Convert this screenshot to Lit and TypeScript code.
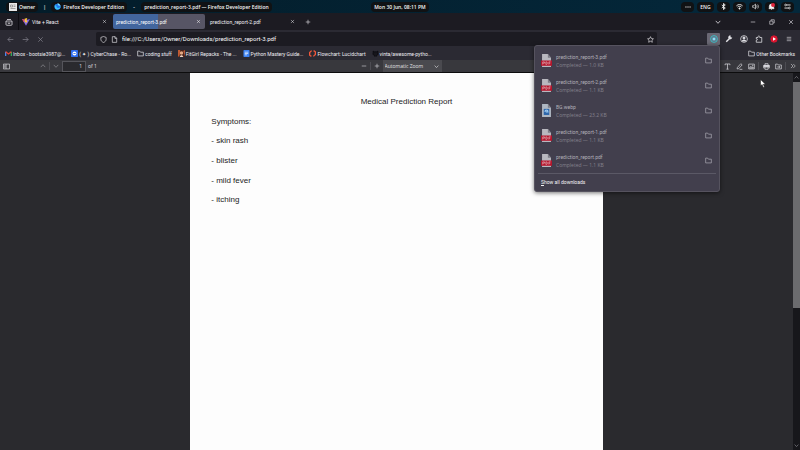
import { LitElement, html, css, svg, TemplateResult, SVGTemplateResult } from "lit";
import { customElement } from "lit/decorators.js";
import { classMap } from "lit/directives/class-map.js";

// Line icons share a 16x16 grid and inherit the text colour.
const shapes: Record<string, SVGTemplateResult> = {
  view: svg`<path d="M2 6h12v7a1.5 1.5 0 0 1-1.5 1.5h-9A1.5 1.5 0 0 1 2 13zM4 3h8M6 9v1.500h4V9"/>`,
  close: svg`<path d="M3 3l10 10M13 3L3 13"/>`,
  plus: svg`<path d="M8 2v12M2 8h12"/>`,
  minus: svg`<path d="M2 8h12"/>`,
  down: svg`<path d="M2 5L8 11.500l6-6.500" stroke-width="2"/>`,
  up: svg`<path d="M2 11L8 4.500l6 6.500" stroke-width="2"/>`,
  restore: svg`<path d="M2 5.500h8.500V14H2zM5.500 5V2H14v8.500h-3"/>`,
  back: svg`<path d="M14.500 8H2M7.500 2.500L2 8l5.500 5.500"/>`,
  forward: svg`<path d="M1.500 8H14M8.500 2.500L14 8l-5.500 5.500"/>`,
  shield: svg`<path d="M8 1.200l6 2v4.300c0 3.500-2.500 6-6 7.300-3.500-1.300-6-3.800-6-7.300V3.200z"/>`,
  page: svg`<path d="M3 1.500h6.500L13 5v9.500H3zM9 1.500V5.500h4"/>`,
  star: svg`<path d="M8 1.500l2 4.300 4.700.6-3.400 3.200.9 4.700L8 12l-4.200 2.300.9-4.700L1.300 6.400l4.700-.6z"/>`,
  folder: svg`<path d="M1.500 13.500v-11h4.500l2 2.500h6.500v8.500z"/>`,
  menu: svg`<path d="M2 3.500h12M2 8h12M2 12.500h12"/>`,
  wrench: svg`<path d="M2.500 13.500L9 7" stroke-width="3"/><path d="M13.500 5.500a3.200 3.200 0 1 1-3-4l-.5 3 2 1z" fill="currentColor"/>`,
  account: svg`<circle cx="8" cy="8" r="6.800"/><circle cx="8" cy="6" r="2.200" fill="currentColor"/><path d="M4 12.200c1-3 7-3 8 0z" fill="currentColor"/>`,
  puzzle: svg`<path d="M2.500 14.500V10.500c3 .5 3-3.500 0-3V5H6C5 1 10.500 1 9.500 5h4v9.500z"/>`,
  sidebar: svg`<path d="M1 2.500h14v11H1zM7 2.500v11M3 5.500h2.500M3 8h2.500M3 10.500h2.500"/>`,
  text: svg`<path d="M2.500 5V2.200h11V5M8 2.200v12M5.500 14h5"/>`,
  pencil: svg`<path d="M3 10.500L11 1.500l3 2.800L6 13l-3.500.5zM8 14.500h6.500"/>`,
  image: svg`<path d="M1.500 2.500h13v11h-13zM3.500 11.500l3-4 2.500 3 1.500-2 2 3z"/><circle cx="11" cy="5.500" r=".8"/>`,
  print: svg`<path d="M4.500 5V1.500h7V5M4 11.500H1.500V5.500h13v6H12M4.500 9h7v5.500h-7z"/><path d="M2 5.500h12v3H2z" fill="currentColor"/>`,
  save: svg`<path d="M1.500 13.500v-11h4.500l2 2h6.500v9zM5 9h6M8.500 6.500L11 9l-2.500 2.500"/>`,
  more: svg`<path d="M2.500 2.500L8 8l-5.500 5.500M8.500 2.500L14 8l-5.500 5.500"/>`,
  dots: svg`<path d="M1 8h3M6.500 8h3M12 8h3" stroke-width="3"/>`,
  bluetooth: svg`<path d="M4 4.500l8 7-4 3.500V1l4 3.500-8 7" stroke-width="2"/>`,
  wifi: svg`<path d="M1 6.500c4-4 10-4 14 0M3.500 9.500c2.500-2.500 6.500-2.500 9 0" stroke-width="2"/><circle cx="8" cy="12.500" r="1.500" fill="currentColor"/>`,
  volume: svg`<path d="M1.500 6H4l4-3.500v11L4 10H1.500z"/><path d="M10.500 5.500c1 1.500 1 3.500 0 5M13 3.500c2 2.500 2 6.500 0 9"/>`,
  bell: svg`<path d="M3 12V7.500a5 5 0 0 1 10 0V12l1 1H2zM7 15h2" fill="currentColor"/><circle cx="11.500" cy="4.500" r="4.500" fill="#e0243c" stroke="none"/>`,
  sliders: svg`<path d="M5 4.500h10M1 11.500h10" stroke-width="2"/><circle cx="3.500" cy="4.500" r="2"/><circle cx="12.500" cy="11.500" r="2"/>`,
  progress: svg`<circle cx="8" cy="8" r="6.800" stroke="#35c6cf" stroke-width="1.800"/><circle cx="8" cy="8" r="3.600" fill="#8fdff0" stroke="#5a8fb0"/>`,
  play: svg`<path d="M8 .5l5.500 2 2 5.500-2 5.500-5.500 2-5.500-2L.5 8l2-5.500z" fill="#d8152f" stroke="none"/><path d="M6 4.500v7l6-3.500z" fill="#fff" stroke="none"/>`,
  owner: svg`<path d="M0 0h16v16H0z" fill="#e8e8e8" stroke="none"/><path d="M3 4h4v4H3zM9 4h4M9 7h4M3 11h10" stroke="#888"/>`,
  firefox: svg`<circle cx="8" cy="8.500" r="7" fill="#2277e8" stroke="none"/><path d="M1.500 6C1 13 6 15.500 9 15c4-.5 6.500-4 6-8-.5 3-3 5-6 4.500C6 11 5 9 6 7 4 7 2.500 6 3 3z" fill="#38c4f5" stroke="none"/><path d="M8 0c3 1 7 4 7 8-2-2-4-3-6-3z" fill="#7ae1ff" stroke="none"/>`,
  vite: svg`<path d="M0 2l8 13.500L16 2 8 4z" fill="#7a63e8" stroke="none"/><path d="M10.500 0L5 1.500 5.500 8h2L7 12l4.500-6.500H9z" fill="#ffc83a" stroke="none"/><path d="M0 2l4 7 1-6z" fill="#e14a5a" stroke="none"/>`,
  gmail: svg`<path d="M1.500 13.500V4" stroke="#4a86f0" stroke-width="3"/><path d="M14.500 13.500V4" stroke="#35a853" stroke-width="3"/><path d="M1.500 4L8 9l6.500-5" stroke="#ea4335" stroke-width="3"/>`,
  chase: svg`<rect width="16" height="16" rx="2" fill="#2f6df0" stroke="none"/><circle cx="8" cy="8" r="4.500" fill="#fff" stroke="none"/><path d="M5.500 8h5" stroke="#2f6df0" stroke-width="2"/>`,
  girl: svg`<path d="M0 0h16v16H0z" fill="#4b2219" stroke="none"/><circle cx="8" cy="7" r="4" fill="#e3a883" stroke="none"/><path d="M0 0h5L4 12 0 16zM12 2l4-2v14z" fill="#bf5b34" stroke="none"/><path d="M4 16c1-5 7-5 8 0z" fill="#efd4c4" stroke="none"/>`,
  docs: svg`<rect x="1" width="14" height="16" rx="1.500" fill="#3d83f5" stroke="none"/><path d="M4 5h8M4 8h8M4 11h5" stroke="#fff"/>`,
  lucid: svg`<path d="M6 1.500L1.500 6v6l4 2.500M10 14.500l4.500-4.500V4l-4-2.500" stroke="#f1573a" stroke-width="3"/>`,
  github: svg`<path d="M6 15v-2.500C2.500 12 1.500 9 2.500 6L2.500 2.500 5.500 4h5l3-1.500V6c1 3 0 6-3.500 6.500V15" fill="#17161c" stroke="#08080c"/>`,
  pdf: svg`<path d="M1.500 0H10l4.500 4.500V16h-13z" fill="#b9b8bf" stroke="none"/><path d="M10 0v4.500h4.500z" fill="#7d7c86" stroke="none"/><path d="M0 8h16v6.500H0z" fill="#b5142b" stroke="none"/><path d="M2.500 13V9.700H5v1.600H2.500M7 9.700v3h1.500l.8-1.500-.8-1.500zM11.500 13V9.700H14M11.500 11.300h2" stroke="#e6c4ca" stroke-width=".8"/>`,
  webp: svg`<path d="M1.500 0H10l4.500 4.500V16h-13z" fill="#aeb6c2" stroke="none"/><path d="M10 0v4.500h4.500z" fill="#7d7c86" stroke="none"/><path d="M4 6h8v7.500H4z" fill="#2d66ab" stroke="none"/><path d="M5.800 9.700a2.200 2.200 0 0 1 4.400 0H7" stroke="#9cc8ee"/>`,
};

const icon = (name: string, size = "s8"): TemplateResult => html`
  <svg class="icon ${size}" viewBox="0 0 16 16" preserveAspectRatio="none" aria-hidden="true">${shapes[name]}</svg>`;

const shared = css`
  * { box-sizing: border-box; }
  button, input, select { font: inherit; color: inherit; background: none; border: 0; margin: 0; padding: 0; border-radius: 0; outline: 0; }
  button { display: flex; align-items: center; justify-content: center; flex: none; }
  a { color: inherit; text-decoration: none; }
  .icon { display: block; flex: none; fill: none; stroke: currentColor; stroke-width: 1.5; }
  .s5 { width: 5px; height: 5px; }
  .s6 { width: 6px; height: 6px; }
  .s7 { width: 7px; height: 7px; }
  .s8 { width: 8px; height: 8px; }
  .file { width: 11px; height: 13px; }
`;

@customElement("system-bar")
export class SystemBar extends LitElement {
  static styles = [shared, css`
    :host { display: grid; grid-template-columns: 1fr auto 1fr; align-items: center; height: 13px; padding: 0 6px; background: linear-gradient(90deg, #031c29, #04283b); color: #f6f6f6; font-weight: 600; }
    .group { display: flex; align-items: center; }
    .end { justify-content: flex-end; gap: 3px; }
    .pill { display: flex; align-items: center; justify-content: center; gap: 2px; height: 10px; padding: 0 3px; border-radius: 4px; background: #101214; white-space: nowrap; }
    .tray { width: 13px; padding: 0; }
    .lang { width: 17px; padding: 0; }
    .bar { width: 13px; text-align: center; }
    .dash { width: 14px; text-align: center; }
  `];
  render() {
    return html`
      <div class="group">
        <span class="pill">${icon("owner")}Owner</span>
        <span class="bar">|</span>
        <span class="pill">${icon("firefox", "s7")}Firefox Developer Edition</span>
        <span class="dash">-</span>
        <span class="pill">prediction_report-3.pdf — Firefox Developer Edition</span>
      </div>
      <span class="pill">Mon 30 Jun, 08:11 PM</span>
      <div class="group end">
        <button class="pill tray" aria-label="More">${icon("dots", "s6")}</button>
        <button class="pill lang">ENG</button>
        ${["bluetooth", "wifi", "volume", "bell", "sliders"].map((n) => html`
          <button class="pill tray" aria-label=${n}>${icon(n, "s7")}</button>`)}
      </div>`;
  }
}

@customElement("tab-strip")
export class TabStrip extends LitElement {
  static styles = [shared, css`
    :host { display: flex; align-items: center; height: 18px; background: #1c1b22; border-bottom: 1px solid #2b2a33; color: #f0eff4; font-family: Roboto, sans-serif; }
    .view { width: 19px; height: 17px; border-right: 1px solid #0d0c11; }
    .tab { display: flex; align-items: center; gap: 2px; width: 92px; height: 15px; margin-right: 2px; padding: 0 4px 0 3px; border-radius: 2px; }
    .label { flex: 1; white-space: nowrap; }
    .active { background: linear-gradient(90deg, #42669e 0 49%, #575565 49%); color: #fff; }
    .new { width: 14px; }
    .controls { display: flex; margin-left: auto; }
    .list { width: 19px; margin-right: 16px; }
    .win { width: 19px; height: 17px; }
  `];
  private tabs = [
    { label: "Vite + React", icon: "vite", active: false },
    { label: "prediction_report-3.pdf", icon: "", active: true },
    { label: "prediction_report-2.pdf", icon: "", active: false },
  ];
  render() {
    return html`
      <button class="view" aria-label="Recent browsing">${icon("view")}</button>
      ${this.tabs.map((t) => html`
        <div class=${classMap({ tab: true, active: t.active })}>
          ${t.icon ? icon(t.icon) : ""}<span class="label">${t.label}</span>
          <button aria-label="Close tab">${icon("close", "s5")}</button>
        </div>`)}
      <button class="new" aria-label="New tab">${icon("plus", "s6")}</button>
      <div class="controls">
        <button class="list" aria-label="List all tabs">${icon("down", "s6")}</button>
        <button class="win" aria-label="Minimise">${icon("minus", "s6")}</button>
        <button class="win" aria-label="Restore">${icon("restore", "s6")}</button>
        <button class="win" aria-label="Close window">${icon("close", "s6")}</button>
      </div>`;
  }
}

@customElement("downloads-panel")
export class DownloadsPanel extends LitElement {
  static styles = [shared, css`
    :host { display: block; width: 186px; padding: 2px 3px; background: #423f4d; border: 1px solid #56535f; border-radius: 3px; color: #b3b1ba; box-shadow: 0 1px 4px #0008; }
    .row { display: flex; align-items: center; gap: 4px; height: 25px; padding: 0 4px 0 3px; }
    .info { flex: 1; }
    .name, .state { display: block; line-height: 8px; white-space: nowrap; }
    .name { font-family: Roboto, sans-serif; }
    .state { color: #85838e; }
    .foot { display: flex; align-items: center; height: 16px; padding: 0 3px; border-top: 1px solid #5b5966; color: #f4f4f6; font-family: Roboto, sans-serif; }
    .key { text-decoration: underline; }
  `];
  private files = [
    ["prediction_report-3.pdf", "1.0 KB", "pdf"],
    ["prediction_report-2.pdf", "1.1 KB", "pdf"],
    ["BG.webp", "23.2 KB", "webp"],
    ["prediction_report-1.pdf", "1.1 KB", "pdf"],
    ["prediction_report.pdf", "1.1 KB", "pdf"],
  ];
  render() {
    return html`
      ${this.files.map(([name, size, kind]) => html`
        <div class="row">
          ${icon(kind, "file")}
          <div class="info"><span class="name">${name}</span><span class="state">Completed — ${size}</span></div>
          <button aria-label="Show ${name} in folder">${icon("folder", "s7")}</button>
        </div>`)}
      <a class="foot" href="#downloads"><span><span class="key">S</span>how all downloads</span></a>`;
  }
}

@customElement("nav-bar")
export class NavBar extends LitElement {
  static styles = [shared, css`
    :host { display: flex; align-items: center; height: 16px; padding: 0 4px 0 3px; background: #2b2a33; color: #e6e5ea; }
    .nav { width: 15px; color: #8a8892; }
    .address { display: flex; align-items: center; gap: 4px; flex: 1; height: 14px; margin: 0 49px 0 48px; padding: 0 3px 0 4px; border-radius: 2px; background: #1c1b22; }
    .url { flex: 1; min-width: 0; height: 12px; color: #fbfbfe; font: 6px/12px Roboto, sans-serif; }
    .tool { width: 15px; height: 12px; }
    .anchor { position: relative; }
    .open { width: 13px; margin: 0 1px; background: #6a6874; border-radius: 1px; }
    .panel { position: absolute; top: 12px; right: 1px; z-index: 5; }
  `];
  render() {
    return html`
      <button class="nav" aria-label="Back">${icon("back", "s7")}</button>
      <button class="nav" aria-label="Forward">${icon("forward", "s7")}</button>
      <button class="nav" aria-label="Stop">${icon("close", "s7")}</button>
      <div class="address">
        ${icon("shield", "s7")}${icon("page", "s7")}
        <input class="url" aria-label="Address" .value=${"file:///C:/Users/Owner/Downloads/prediction_report-3.pdf"}>
        <button aria-label="Bookmark this page">${icon("star", "s7")}</button>
      </div>
      <div class="anchor">
        <button class="tool open" aria-label="Downloads">${icon("progress")}</button>
        <downloads-panel class="panel"></downloads-panel>
      </div>
      ${["wrench", "account", "puzzle", "play", "menu"].map((n) => html`
        <button class="tool" aria-label=${n}>${icon(n, n === "menu" ? "s6" : "s8")}</button>`)}`;
  }
}

@customElement("bookmark-bar")
export class BookmarkBar extends LitElement {
  static styles = [shared, css`
    :host { display: flex; align-items: center; gap: 6px; height: 13px; padding: 0 5px; background: #2b2a33; color: #f0eff4; font-family: Roboto, sans-serif; }
    .mark { display: flex; align-items: center; gap: 1px; white-space: nowrap; }
    .other { margin-left: auto; }
  `];
  private marks = [
    ["gmail", "Inbox - bootsie3987@..."],
    ["chase", "( ✦ ) CyberChase - Ro..."],
    ["folder", "coding stuff"],
    ["girl", "FitGirl Repacks - The ..."],
    ["docs", "Python Mastery Guide..."],
    ["lucid", "Flowchart: Lucidchart"],
    ["github", "vinta/awesome-pytho..."],
  ];
  render() {
    return html`
      ${this.marks.map(([i, label]) => html`<a class="mark" href="#bookmark">${icon(i, "s7")}${label}</a>`)}
      <a class="mark other" href="#other">${icon("folder", "s7")}Other Bookmarks</a>`;
  }
}

@customElement("pdf-toolbar")
export class PdfToolbar extends LitElement {
  static styles = [shared, css`
    :host { display: grid; grid-template-columns: 1fr auto 1fr; align-items: center; height: 13px; padding: 0 1px 0 0; background: #38383d; border-bottom: 1px solid #0c0c0d; color: #e2e2e6; }
    .group { display: flex; align-items: center; height: 12px; }
    .end { justify-content: flex-end; }
    .tool { width: 12px; height: 12px; }
    .find { margin-left: 25px; color: #88888e; }
    .sep { width: 1px; height: 8px; background: #4d4d53; }
    .gap { margin: 0 1px; }
    .dim { color: #88888e; }
    .page { width: 24px; height: 11px; padding-right: 3px; border: 1px solid #55555b; background: #2a2a2e; text-align: right; }
    .total { margin-left: 2px; }
    .zoom { position: relative; display: flex; align-items: center; width: 59px; height: 12px; background: #4a4a4f; }
    .zoom select { appearance: none; width: 100%; height: 12px; padding-left: 2px; }
    .arrow { position: absolute; right: 3px; pointer-events: none; }
  `];
  render() {
    return html`
      <div class="group">
        <button class="tool" aria-label="Toggle sidebar">${icon("sidebar", "s7")}</button>
        <button class="tool find" aria-label="Previous page">${icon("up", "s6")}</button>
        <span class="sep"></span>
        <button class="tool dim" aria-label="Next page">${icon("down", "s6")}</button>
        <input class="page" id="page" aria-label="Page" value="1">
        <label class="total" for="page">of 1</label>
      </div>
      <div class="group">
        <button class="tool" aria-label="Zoom out">${icon("minus", "s6")}</button>
        <span class="sep"></span>
        <button class="tool" aria-label="Zoom in">${icon("plus", "s6")}</button>
        <div class="zoom">
          <select aria-label="Zoom"><option>Automatic Zoom</option></select>
          <span class="arrow">${icon("down", "s5")}</span>
        </div>
      </div>
      <div class="group end">
        ${["text", "pencil", "image"].map((n) => html`<button class="tool" aria-label=${n}>${icon(n, "s7")}</button>`)}
        <span class="sep gap"></span>
        ${["print", "save"].map((n) => html`<button class="tool" aria-label=${n}>${icon(n, "s7")}</button>`)}
        <span class="sep gap"></span>
        <button class="tool" aria-label="Tools">${icon("more", "s6")}</button>
      </div>`;
  }
}

@customElement("app-root")
export class AppRoot extends LitElement {
  static styles = [shared, css`
    :host { position: relative; display: flex; flex-direction: column; height: 100vh; overflow: hidden; font: 5px/8px "Open Sans", "Noto Sans", sans-serif; background: #2a2a2e; }
    .viewer { display: flex; flex: 1; min-height: 0; }
    .canvas { display: flex; justify-content: center; flex: 1; }
    .sheet { width: 52%; padding: 20px 21px; background: #fdfdfd; color: #1c1c1c; font: 8px/18px "Liberation Sans", Arial, sans-serif; }
    .lines { display: grid; grid-auto-rows: 1fr; height: 118px; }
    .title { margin: 0; padding-left: 20px; font: inherit; text-align: center; }
    .text { margin: 0; }
    .scroll { display: flex; flex-direction: column; align-items: center; width: 7px; background: #17171b; color: #8c8c92; }
    .cap { display: flex; align-items: center; height: 9px; }
    .track { flex: 1; width: 7px; }
    .thumb { width: 7px; height: 63%; background: #6b6b6e; }
    .cursor { position: absolute; left: 95%; top: 79px; width: 6px; height: 9px; }
  `];
  render() {
    return html`
      <system-bar></system-bar>
      <tab-strip></tab-strip>
      <nav-bar></nav-bar>
      <bookmark-bar></bookmark-bar>
      <pdf-toolbar></pdf-toolbar>
      <main class="viewer">
        <div class="canvas">
          <article class="sheet">
            <div class="lines">
              <h1 class="title">Medical Prediction Report</h1>
              ${["Symptoms:", "- skin rash", "- blister", "- mild fever", "- itching"].map((l) => html`<p class="text">${l}</p>`)}
            </div>
          </article>
        </div>
        <div class="scroll">
          <span class="cap">${icon("up", "s5")}</span>
          <div class="track"><div class="thumb"></div></div>
          <span class="cap">${icon("down", "s5")}</span>
        </div>
      </main>
      <svg class="cursor" viewBox="0 0 12 18" aria-hidden="true"><path d="M1 1v13l3-3 2.500 6 2.500-1-2.500-5.500H11z" fill="#fff" stroke="#111"/></svg>`;
  }
}
